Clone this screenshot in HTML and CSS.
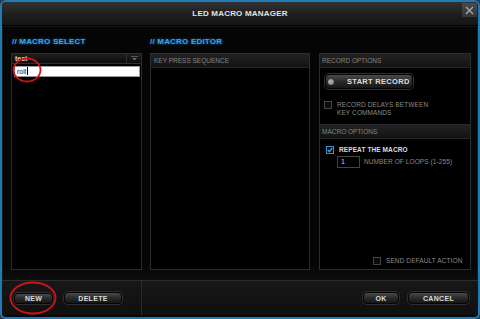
FILE: index.html
```html
<!DOCTYPE html>
<html lang="en">
<head>
    <meta charset="UTF-8">
    <meta name="viewport" content="width=device-width, initial-scale=1.0">
    <title>LED Macro Manager</title>
    <link rel="stylesheet" href="styles.css">
</head>
<body>

<div class="window">
    <div class="titlebar">
        <span class="title">LED MACRO MANAGER</span>
        <div class="close">
            <svg width="9" height="9" viewBox="0 0 9 9"><path d="M1 1 L8 8 M8 1 L1 8" stroke="#a8a8a8" stroke-width="1.4"/></svg>
        </div>
    </div>

    <div class="main">
        <h2 class="heading">// MACRO SELECT</h2>
        <h2 class="heading">// MACRO EDITOR</h2>

        <div class="panel select-panel">
            <div class="select-head">
                <span class="select-name">test</span>
                <span class="drop">
                    <svg width="7" height="5" viewBox="0 0 7 5"><path d="M0 0.5 H7" stroke="#555" stroke-width="1"/><path d="M1 2 L6 2 L3.5 4.5 Z" fill="#666"/></svg>
                </span>
            </div>
            <div class="name-input">roll<span class="caret"></span></div>
        </div>

        <div class="panel editor-panel">
            <div class="panel-head">KEY PRESS SEQUENCE</div>
        </div>

        <div class="panel options-panel">
            <div class="panel-head">RECORD OPTIONS</div>
            <div class="section record-section">
                <button class="btn btn-record"><span class="dot"></span>START RECORD</button>
                <div class="check-row delays">
                    <span class="box"></span>
                    <span class="label">RECORD DELAYS BETWEEN<br>KEY COMMANDS</span>
                </div>
            </div>
            <div class="panel-head split">MACRO OPTIONS</div>
            <div class="section">
                <div class="check-row repeat">
                    <span class="box checked">
                        <svg width="6" height="6" viewBox="0 0 6 6"><path d="M0.8 3 L2.4 4.6 L5.3 1" stroke="#4aa8e8" stroke-width="1.3" fill="none"/></svg>
                    </span>
                    <span class="label bright">REPEAT THE MACRO</span>
                </div>
                <div class="loops-row">
                    <span class="loops-input">1</span>
                    <span class="label">NUMBER OF LOOPS (1-255)</span>
                </div>
            </div>
            <div class="check-row send-default">
                <span class="box"></span>
                <span class="label">SEND DEFAULT ACTION</span>
            </div>
        </div>
    </div>

    <div class="footer">
        <div class="footer-left">
            <button class="btn btn-new">NEW</button>
            <button class="btn btn-delete">DELETE</button>
        </div>
        <div class="footer-right">
            <button class="btn btn-ok">OK</button>
            <button class="btn btn-cancel">CANCEL</button>
        </div>
    </div>
</div>

<!-- red annotation marks drawn over the dialog -->
<svg class="marks" width="480" height="319" viewBox="0 0 480 319">
    <ellipse cx="27" cy="70" rx="13.5" ry="11.5" fill="none" stroke="#d01414" stroke-width="1.8"/>
    <ellipse cx="33" cy="298" rx="22.5" ry="15.5" fill="none" stroke="#d01414" stroke-width="1.8"/>
</svg>

</body>
</html>
```

FILE: styles.css
```css
body {
    margin: 0;
    padding: 0;
    width: 480px;
    height: 319px;
    background: #2d3b44;
    font-family: 'Liberation Sans', Arial, sans-serif;
    position: relative;
    overflow: hidden;
}
.window {
    width: 480px;
    height: 319px;
    box-sizing: border-box;
    border: 2px solid #1f7bb8;
    border-radius: 6px;
    background: #080808;
    overflow: hidden;
}
.titlebar {
    position: relative;
    height: 23px;
    background: linear-gradient(#313131, #1d1d1d 60%, #151515);
    border-bottom: 1px solid #000;
    text-align: center;
}
.title {
    line-height: 23px;
    font-size: 8px;
    font-weight: bold;
    color: #e2e2e2;
    letter-spacing: 0.2px;
}
.close {
    position: absolute;
    top: 1px;
    right: 1px;
    width: 15px;
    height: 14px;
    background: linear-gradient(#4a4a4a, #343434);
    display: flex;
    align-items: center;
    justify-content: center;
}
.main {
    height: 254px;
    box-sizing: border-box;
    padding: 10px 0 0 8px;
    border-top: 1px solid #161616;
    border-left: 1px solid #1a1a1a;
    border-right: 1px solid #1a1a1a;
    display: grid;
    grid-template-columns: 131px 160px 152px;
    grid-template-rows: 10px 217px;
    column-gap: 8px;
    row-gap: 6px;
    background: linear-gradient(#050505, #050505 94%, #0e0e0e);
}
.heading {
    margin: 0;
    font-size: 8px;
    line-height: 10px;
    font-weight: bold;
    color: #34a4ea;
    text-shadow: 0 0 3px rgba(40, 150, 230, 0.7);
    letter-spacing: 0.2px;
}
.heading:first-child {
    padding-left: 1px;
}
.panel {
    grid-row: 2;
    border: 1px solid #2c2c2c;
    background: #000;
    box-sizing: border-box;
}
.select-panel {
    grid-column: 1;
}
.editor-panel {
    grid-column: 2;
}
.options-panel {
    grid-column: 3;
    margin-left: 1px;
    width: 152px;
    display: flex;
    flex-direction: column;
}
.select-head {
    height: 9px;
    display: flex;
    background: linear-gradient(#1e1e1e, #0c0c0c);
    border-bottom: 1px solid #303030;
}
.select-name {
    flex: 1;
    font-size: 7px;
    line-height: 9px;
    font-weight: bold;
    color: #d8d8d8;
    padding-left: 3px;
}
.drop {
    width: 14px;
    border-left: 1px solid #303030;
    display: flex;
    align-items: center;
    justify-content: center;
}
.name-input {
    margin: 2px 1px 0 2px;
    height: 11px;
    box-sizing: border-box;
    background: #fff;
    border: 1px solid #9a9a9a;
    font-size: 7px;
    line-height: 9px;
    color: #111;
    padding-left: 2px;
}
.caret {
    display: inline-block;
    width: 1px;
    height: 8px;
    background: #000;
    vertical-align: -1px;
    margin-left: 1px;
}
.panel-head {
    height: 13px;
    background: linear-gradient(#222, #131313);
    border-bottom: 1px solid #262626;
    font-size: 6.5px;
    line-height: 13px;
    color: #838383;
    padding-left: 3px;
}
.options-panel .panel-head {
    padding-left: 2px;
}
.panel-head.split {
    border-top: 1px solid #2c2c2c;
    height: 13px;
}
.section {
    padding: 6px 0 0 5px;
}
.record-section {
    height: 50px;
}
.btn {
    font-family: 'Liberation Sans', Arial, sans-serif;
    font-size: 7px;
    font-weight: bold;
    color: #dcdcdc;
    background: linear-gradient(#4a4a4a, #2a2a2a 50%, #161616);
    border: 1px solid #050505;
    border-radius: 4px;
    box-shadow: 0 0 0 1px #2e2e2e;
    padding: 0;
    cursor: pointer;
    letter-spacing: 0.3px;
}
.btn-record {
    width: 88px;
    height: 15px;
    display: flex;
    align-items: center;
    font-size: 7.5px;
    text-align: left;
}
.dot {
    width: 6px;
    height: 6px;
    border-radius: 50%;
    background: radial-gradient(circle at 40% 40%, #bbb, #666);
    margin: 0 13px 0 2px;
}
.check-row {
    display: flex;
    align-items: flex-start;
    gap: 5px;
}
.delays {
    margin: 12px 0 0 -1px;
}
.box {
    width: 8px;
    height: 8px;
    box-sizing: border-box;
    border: 1px solid #444;
    background: #0b0b0b;
    flex: none;
    display: flex;
    align-items: center;
    justify-content: center;
}
.box.checked {
    border-color: #3590d0;
}
.label {
    font-size: 6.5px;
    line-height: 8px;
    color: #8a8a8a;
    letter-spacing: 0.1px;
}
.label.bright {
    color: #dedede;
    font-weight: bold;
}
.repeat {
    margin: 1px 0 0 1px;
}
.loops-row {
    display: flex;
    align-items: center;
    gap: 4px;
    margin: 2px 0 0 12px;
}
.loops-input {
    width: 23px;
    height: 12px;
    box-sizing: border-box;
    border: 1px solid #454545;
    background: #000;
    font-size: 7px;
    line-height: 10px;
    color: #d0d0d0;
    padding-left: 3px;
}
.send-default {
    margin: auto 0 4px 53px;
}
.footer {
    height: 35px;
    box-sizing: border-box;
    border-top: 1px solid #2c2c2c;
    background: linear-gradient(#171717, #0f0f0f);
    display: flex;
}
.footer-left {
    width: 140px;
    box-sizing: border-box;
    border-right: 1px solid #2a2a2a;
    display: flex;
    align-items: center;
    gap: 11px;
    padding-left: 12px;
}
.footer-right {
    flex: 1;
    display: flex;
    align-items: center;
    justify-content: flex-end;
    gap: 9px;
    padding-right: 9px;
}
.btn-new {
    width: 39px;
    height: 11px;
}
.btn-delete {
    width: 58px;
    height: 12px;
}
.btn-ok {
    width: 36px;
    height: 12px;
}
.btn-cancel {
    width: 61px;
    height: 12px;
}
.marks {
    position: absolute;
    top: 0;
    left: 0;
    pointer-events: none;
}
```
